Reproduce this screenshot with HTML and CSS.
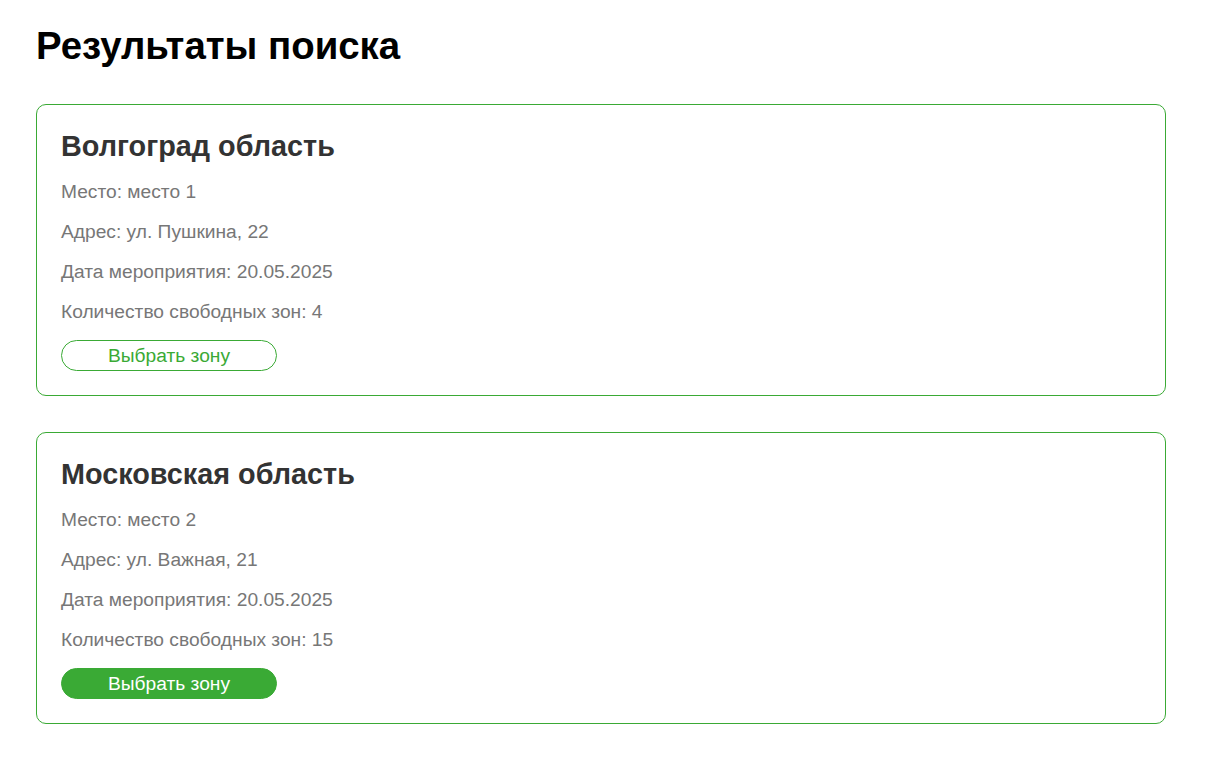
FILE: index.html
```html
<!DOCTYPE html>
<html lang="ru">
<head>
<meta charset="utf-8">
<title>Результаты поиска</title>
<link rel="stylesheet" href="styles.css">
</head>
<body>
<main class="page">
  <h1 class="page-title">Результаты поиска</h1>
  <section class="results">
    <article class="card">
      <h2 class="card-title">Волгоград область</h2>
      <p class="card-line">Место: место 1</p>
      <p class="card-line">Адрес: ул. Пушкина, 22</p>
      <p class="card-line">Дата мероприятия: 20.05.2025</p>
      <p class="card-line">Количество свободных зон: 4</p>
      <button class="btn btn-outline">Выбрать зону</button>
    </article>
    <article class="card">
      <h2 class="card-title">Московская область</h2>
      <p class="card-line">Место: место 2</p>
      <p class="card-line">Адрес: ул. Важная, 21</p>
      <p class="card-line">Дата мероприятия: 20.05.2025</p>
      <p class="card-line">Количество свободных зон: 15</p>
      <button class="btn btn-filled">Выбрать зону</button>
    </article>
  </section>
</main>
</body>
</html>
```
FILE: styles.css
```css
* { box-sizing: border-box; }
body {
  margin: 0;
  background: #fff;
  font-family: "Liberation Sans", Arial, sans-serif;
}
.page {
  padding: 24px 47px 20px 36px;
}
.page-title {
  margin: 0 0 36px;
  font-size: 38.4px;
  font-weight: bold;
  color: #000;
  line-height: 44px;
}
.results {
  display: flex;
  flex-direction: column;
  gap: 36px;
}
.card {
  border: 1px solid #3aaa35;
  border-radius: 10px;
  padding: 25px 24px 24px;
}
.card-title {
  margin: 0 0 18px;
  font-size: 28.8px;
  font-weight: bold;
  color: #333;
  line-height: 33px;
}
.card-line {
  margin: 0 0 18px;
  font-size: 19.2px;
  line-height: 22px;
  color: #777;
}
.card-line:last-of-type {
  margin-bottom: 17px;
}
.btn {
  display: block;
  width: 216px;
  height: 31px;
  border-radius: 16px;
  border: 1px solid #3aaa35;
  font-family: "Liberation Sans", Arial, sans-serif;
  font-size: 19.2px;
  line-height: 22px;
  cursor: pointer;
  padding: 0;
}
.btn-outline {
  background: #fff;
  color: #3aaa35;
}
.btn-filled {
  background: #3aaa35;
  color: #fff;
}
```
